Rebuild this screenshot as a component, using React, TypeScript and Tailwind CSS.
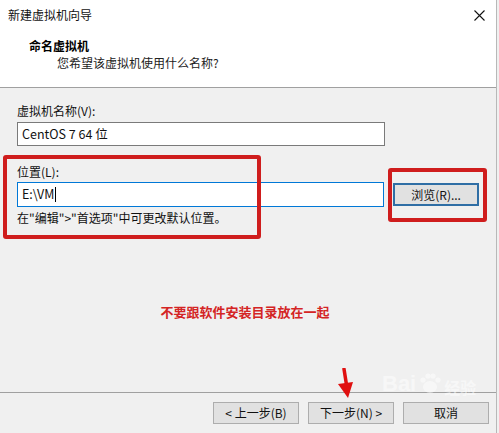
import React from "react";

const font = { fontFamily: '"Noto Sans CJK SC", "Microsoft YaHei", sans-serif' };

function Btn({ children }: { children: React.ReactNode }) {
  return (
    <div className="w-[86px] h-[22px] bg-[#e1e1e1] border border-[#adadad] flex items-center justify-center text-[12px] text-[#111] leading-none">
      {children}
    </div>
  );
}

export default function App() {
  return (
    <div className="w-[499px] h-[433px] flex bg-[#f0f0f0] overflow-hidden text-black" style={font}>
      <div className="w-[496px] h-full flex flex-col relative">
        {/* header */}
        <div className="h-[88px] bg-white border-b border-[#a0a0a0] flex flex-col relative">
          <div className="h-[30px] flex items-center justify-between pl-[8px] pr-[10px] text-[12px] text-[#111]">
            <span>新建虚拟机向导</span>
            <svg width="11" height="11" viewBox="0 0 11 11" className="mr-[1px]">
              <path d="M0.5 0.5 L10.5 10.5 M10.5 0.5 L0.5 10.5" stroke="#111" strokeWidth="1.1" />
            </svg>
          </div>
          <div className="pl-[29px] mt-[8px] text-[12px] font-bold leading-[16px]">命名虚拟机</div>
          <div className="pl-[57px] mt-[1px] text-[12px] leading-[16px] text-[#222]">您希望该虚拟机使用什么名称?</div>
        </div>

        {/* body */}
        <div className="flex-1 flex flex-col relative px-[17px]">
          <div className="mt-[15px] text-[12px] leading-[16px] text-[#111]">虚拟机名称(V):</div>
          <div className="mt-[3px] w-[368px] h-[24px] bg-white border border-[#7a7a7a] flex items-center pl-[4px] text-[12.5px] text-[#111]">
            CentOS 7 64 位
          </div>
          <div className="mt-[18px] text-[12px] leading-[16px] text-[#111]">位置(L):</div>
          <div className="mt-[2px] flex items-center gap-[9px]">
            <div className="w-[368px] h-[25px] bg-white border border-[#0078d7] flex items-center pl-[4px] text-[12.5px] text-[#111]">
              E:\VM<span className="inline-block w-px h-[15px] bg-black ml-[1px]" />
            </div>
            <div className="w-[86px] h-[23px] bg-[#e1e1e1] border-2 border-[#2f6ea5] flex items-center justify-center text-[12px] text-[#111]">
              浏览(R)...
            </div>
          </div>
          <div className="mt-[3px] text-[12px] leading-[16px] text-[#111]">在"编辑"&gt;"首选项"中可更改默认位置。</div>

          <div className="mt-[77px] text-center text-[13px] leading-[18px] font-bold text-[#d42424] pr-[6px]">
            不要跟软件安装目录放在一起
          </div>

          {/* annotations */}
          <div className="absolute left-[3px] top-[67px] w-[258px] h-[84px] border-[4px] border-[#cf1d1d] rounded-[3px]" />
          <div className="absolute left-[388px] top-[80px] w-[99px] h-[54px] border-[4px] border-[#cf1d1d] rounded-[3px]" />
        </div>

        {/* footer */}
        <div className="h-[41px] border-t border-[#a0a0a0] flex items-start justify-end gap-[9px] pt-[9px] pr-[7px] relative">
          <Btn>&lt; 上一步(B)</Btn>
          <Btn>下一步(N) &gt;</Btn>
          <Btn>取消</Btn>
          {/* watermark */}
          <div className="absolute left-[382px] top-[-22px] flex items-end gap-[2px] opacity-50 pointer-events-none">
            <span className="text-[22px] font-bold text-white leading-none" style={{ fontFamily: '"Liberation Sans", sans-serif' }}>Bai</span>
            <svg width="24" height="24" viewBox="0 0 24 24">
              <ellipse cx="12" cy="16" rx="7" ry="6" fill="white" />
              <circle cx="5" cy="9" r="2.6" fill="white" />
              <circle cx="10" cy="5" r="2.6" fill="white" />
              <circle cx="15" cy="5" r="2.6" fill="white" />
              <circle cx="20" cy="9" r="2.6" fill="white" />
            </svg>
            <span className="text-[16px] font-bold text-white leading-none">经验</span>
          </div>
        </div>

        {/* red arrow */}
        <svg className="absolute left-[334px] top-[368px]" width="22" height="32" viewBox="0 0 22 32">
          <path d="M10 1 L13 20" stroke="#e01010" strokeWidth="3.5" strokeLinecap="round" />
          <path d="M4 16 L19 14 L14 30 Z" fill="#e01010" />
        </svg>
      </div>
      <div className="w-px h-full bg-[#b8b8b8]" />
      <div className="flex-1 h-full bg-[#f0f0f0]" />
    </div>
  );
}
